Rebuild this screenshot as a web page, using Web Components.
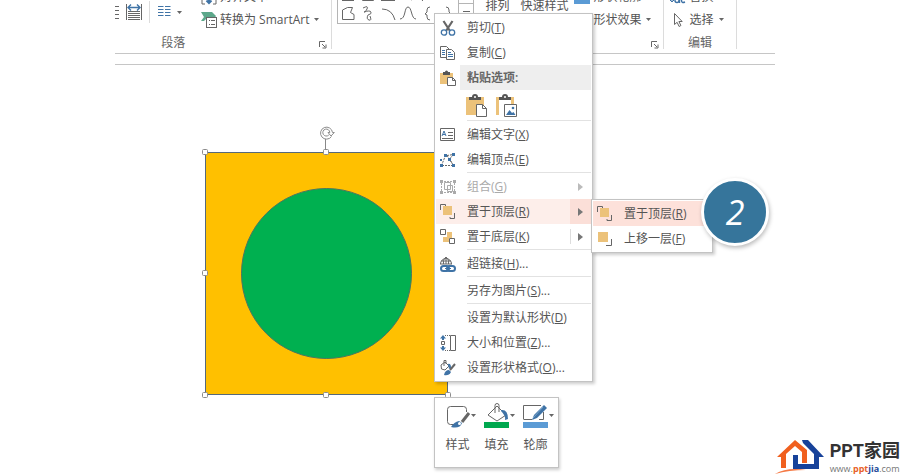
<!DOCTYPE html>
<html lang="zh-CN">
<head>
<meta charset="utf-8">
<title>置于顶层</title>
<style>
html,body{margin:0;height:100%}
body{background:#fff;color:#555;font:12px/16px "Open Sans","Noto Sans CJK SC",sans-serif;overflow:hidden}
</style>
</head>
<body>
<slide-editor>
  <ribbon-bar slot="ribbon">
    <ribbon-group label="段落" launcher style="--shift:100px">
      <ribbon-tools></ribbon-tools>
      <ribbon-stack style="--left:19px">
        <ribbon-command icon="valign" arrow>对齐文本</ribbon-command>
        <ribbon-command icon="smartart" arrow>转换为 SmartArt</ribbon-command>
      </ribbon-stack>
    </ribbon-group>
    <ribbon-group label="" launcher>
      <shape-gallery></shape-gallery>
      <ribbon-caption>排列</ribbon-caption>
      <ribbon-caption>快速样式</ribbon-caption>
      <ribbon-stack style="--left:6px">
        <ribbon-command icon="outlinebar" arrow>形状轮廓</ribbon-command>
        <ribbon-command icon="blank" arrow>形状效果</ribbon-command>
      </ribbon-stack>
    </ribbon-group>
    <ribbon-group label="编辑">
      <ribbon-stack style="--left:6px">
        <ribbon-command icon="replace" arrow>替换</ribbon-command>
        <ribbon-command icon="cursor" arrow>选择</ribbon-command>
      </ribbon-stack>
    </ribbon-group>
  </ribbon-bar>
  <selected-shape></selected-shape>
  <context-menu>
    <menu-item icon="cut" key="T">剪切</menu-item>
    <menu-item icon="copy" key="C">复制</menu-item>
    <paste-options></paste-options>
    <menu-line></menu-line>
    <menu-item icon="text" key="X">编辑文字</menu-item>
    <menu-item icon="points" key="E">编辑顶点</menu-item>
    <menu-line></menu-line>
    <menu-item icon="group" key="G" arrow disabled>组合</menu-item>
    <menu-item icon="front" key="R" arrow split active>置于顶层</menu-item>
    <menu-item icon="back" key="K" arrow split>置于底层</menu-item>
    <menu-line></menu-line>
    <menu-item icon="link" key="H" more>超链接</menu-item>
    <menu-line></menu-line>
    <menu-item icon="blank" key="S" more>另存为图片</menu-item>
    <menu-line></menu-line>
    <menu-item icon="blank" key="D">设置为默认形状</menu-item>
    <menu-item icon="size" key="Z" more>大小和位置</menu-item>
    <menu-item icon="format" key="O" more>设置形状格式</menu-item>
  </context-menu>
  <context-menu sub>
    <menu-item icon="front" key="R" active>置于顶层</menu-item>
    <menu-item icon="forward" key="F">上移一层</menu-item>
  </context-menu>
  <step-badge>2</step-badge>
  <mini-toolbar>
    <mini-button icon="style">样式</mini-button>
    <mini-button icon="fill">填充</mini-button>
    <mini-button icon="outline">轮廓</mini-button>
  </mini-toolbar>
  <site-mark></site-mark>
</slide-editor>
<script>
const G='#666',B='#3f73a6',T='#ecc27a';
const ICONS={
blank:[16,16,''],
valign:[16,16,`<path d="M1 5v10h3M15 5v10h-3" fill="none" stroke="${G}"/><path d="M8 5v9M5.500 11.500 8 14l2.500-2.500" fill="none" stroke="${B}" stroke-width="2"/>`],
smartart:[16,16,`<path d="M0 0h11l4 4-2 3H5L3 9H0l3-4z" fill="#5da88b"/><rect x="5.500" y="5.500" width="10" height="10" fill="#fff" stroke="${G}"/><path d="M8 8.500h1M10 8.500h4M8 12.500h1M10 12.500h4" stroke="${G}"/>`],
outlinebar:[16,16,`<rect y="8" width="16" height="7" fill="#5b9bd5"/>`],
replace:[16,16,`<path d="M2 8v4M0 11l2 2 2-2" fill="none" stroke="${B}"/><g fill="none" stroke="${B}" stroke-width="1.400"><circle cx="7" cy="11.500" r="2"/><path d="M9.500 9v5M15 10q-3.500-1.500-3.500 1.500t3.500 1.500"/></g>`],
cursor:[16,16,`<path d="M4.500 1.500v11l2.600-2.200 2 4.200 1.800-1-2-4h3.300z" fill="#fff" stroke="${G}"/>`],
cut:[16,16,`<path d="M3.500 1 10 11M12.500 1 6 11" stroke="${G}" stroke-width="2.200"/><g fill="#fff" stroke="${B}" stroke-width="1.300"><circle cx="4" cy="12.500" r="2.700"/><circle cx="12" cy="12.500" r="2.700"/></g>`],
copy:[16,16,`<g fill="#fff" stroke="${G}"><path d="M.5 1.500h6l2.500 2.500v8.500H.5z"/><path d="M6.500 4.500h5l3 3v7h-8z"/></g><path d="M2 5.500h3M2 7.500h3M2 9.500h3M8 9.500h5M8 11.500h5M8 7.500h3" stroke="${B}"/>`],
paste:[16,16,`<path d="M0 3h13v11H0z" fill="${T}"/><path d="M3 2h2a1.500 1.500 0 0 1 3 0h2v3H3z" fill="#555"/><path d="M7.500 7.500h5l3 3v5h-8z" fill="#fff" stroke="${G}"/><path d="M12.500 7.500v3h3" fill="none" stroke="${G}"/>`],
paste1:[23,24,`<path d="M1 4h18v18H1z" fill="${T}"/><path d="M4 4h3a3 3 0 0 1 6 0h3v3H4z" fill="#555"/><circle cx="10" cy="4" r="1" fill="#fff"/><path d="M11.500 11.500h6l4 4v8h-10z" fill="#fff" stroke="${G}"/><path d="M17.500 11.500v4h4" fill="none" stroke="${G}"/>`],
paste2:[23,24,`<path d="M1 4h18v18H1z" fill="${T}"/><path d="M4 7h12v15H4z" fill="#fff"/><path d="M4 4h3a3 3 0 0 1 6 0h3v3H4z" fill="#555"/><circle cx="10" cy="4" r="1" fill="#fff"/><path d="M9.500 11.500h12v12h-12z" fill="#fff" stroke="${G}"/><path d="m11 22 3.500-5 2.500 3 1.500-1 2 3z" fill="${B}"/><circle cx="18" cy="15" r="1.300" fill="${B}"/>`],
text:[16,16,`<path d="M.5 1.500h14v12H.5z" fill="#fff" stroke="${G}"/><path d="m2 9 2-5 2 5M3 7.500h2" fill="none" stroke="${B}"/><path d="M8 5.500h5M8 8.500h5M2 11.500h11" stroke="${G}"/>`],
points:[16,16,`<path d="M1.500 13.500 5.500 3.500M7 3.500l6.500-1L9.500 7l4 6.500z" fill="none" stroke="${G}" stroke-dasharray="2 1"/><path d="M2 13.500h11" stroke="${G}" stroke-dasharray="2 1"/><g fill="${B}"><path d="M0 12h3v3H0zM4 2h3v3H4zM12 1h3v3h-3zM8 6h3v3H8zM12 12h3v3h-3zM0 7h2v2H0z"/></g>`],
group:[16,16,`<g fill="none" stroke="#aaa"><path d="M4 2.500h8M4 13.500h8M1.500 4v8M14.500 4v8" stroke-dasharray="2 1"/><path d="M4.500 3.500h6v7h-6zM7.500 6.500h5v6h-5z"/></g><path d="M0 1h3v3H0zM13 1h3v3h-3zM0 12h3v3H0zM13 12h3v3h-3z" fill="#aaa"/>`],
front:[16,16,`<path d="M.5 6V.5h5V2M14.500 9v5.500H10V13" fill="none" stroke="${G}"/><path d="M3 2h9v9H3z" fill="${T}"/>`],
forward:[16,16,`<path d="M14.500 8v6.500H9" fill="none" stroke="${G}"/><path d="M1 1h10v10H1z" fill="${T}"/>`],
back:[16,16,`<path d="M7 3h5v6H7zM3 8h6v5H3z" fill="${T}"/><path d="M.5.5h5v5h-5zM9.500 9.500h5v5h-5z" fill="#fff" stroke="${G}"/>`],
link:[16,16,`<path d="M.5 8a5.500 5.500 0 1 1 11 0M6 1v7M1 5h10M0 8h12M6 1Q2 4 3.500 8M6 1q4 3 2.500 7" fill="none" stroke="${G}"/><rect x="1" y="10" width="8" height="5" rx="2.500" fill="#fff" stroke="${B}" stroke-width="2"/><rect x="7" y="10" width="8" height="5" rx="2.500" fill="none" stroke="${B}" stroke-width="2"/><path d="M5 12.500h6" stroke="${B}"/>`],
size:[16,16,`<path d="M3 0 0 3.500h2V5h2V3.500h2zM3 16l-3-3.500h2V11h2v1.500h2z" fill="${B}"/><path d="M1.500 6.500h3v3h-3zM10.500.5h5v15h-5z" fill="#fff" stroke="${G}"/><path d="M5 .5h5M5 15.500h5" stroke="${G}" stroke-dasharray="1 1"/>`],
format:[16,16,`<path d="m1 5 4-3 4 4-4 4-3.500-1zM4 6V.5h2V4" fill="#fff" stroke="${G}"/><path d="M8 4q3-1 3 4L9 9z" fill="${B}"/><path d="m15 4-5 6" stroke="${G}" stroke-width="2"/><path d="M4 15q1-5 5-5l2 2q-2 4-7 3z" fill="${B}"/>`],
style:[32,26,`<path d="M9 21.500H5.500a3 3 0 0 1-3-3v-12a3 3 0 0 1 3-3h13a3 3 0 0 1 3 3V9" fill="#fff" stroke="${G}"/><path d="m24 10-7 9" stroke="${G}" stroke-width="3"/><path d="M6 24q3-5 8-6l3 2q-2 6-11 4z" fill="${B}"/><circle cx="14.500" cy="20.500" r="1.500" fill="#fff"/><path d="M26 11h5l-2.500 3z" fill="${G}"/>`],
fill:[32,26,`<path d="M4 12 13 3l9 9-9 6zM11 10V2.500a2 2 0 0 1 4 0V9" fill="#fff" stroke="${G}"/><path d="M17 7q7-1 7 9l-3 1q1-4-4-9z" fill="${B}"/><path d="M0 19h25v6H0z" fill="#00a84f"/><path d="M26 11h5l-2.500 3z" fill="${G}"/>`],
outline:[32,26,`<path d="M.5 16V2.500H18M.5 16.500H9M20.500 9v7.500H16" fill="none" stroke="${G}"/><path d="M21 2 11 12l-2 5 5-2L24 5z" fill="${B}"/><path d="M20 4 10 15" stroke="#7aa5cc"/><path d="M0 19h25v6H0z" fill="#5b9bd5"/><path d="M26 11h5l-2.500 3z" fill="${G}"/>`],
lines:[13,12,`<path d="M0 .5h5.500M0 3.500h5.500M0 6.500h5.500M0 9.500h5.500M7 .5h5.500M7 3.500h5.500M7 6.500h5.500M7 9.500h5.500" stroke="${B}"/>`],
listend:[4,14,`<path d="M0 1.500h4M0 5.500h4M0 9.500h4M0 13.500h4" stroke="${G}"/>`],
spread:[16,16,`<path d="M.5 0v16M15.500 0v16M2 7.500h12M2 9.500h12M2 11.500h12M2 13.500h12M2 15.500h12" stroke="${G}"/><path d="M2 3.500h12M5 .5l-3 3 3 3M11 .5l3 3-3 3" fill="none" stroke="${B}" stroke-width="1.400"/>`],
launch:[8,8,`<path d="M.5 6V.5H6M3 3l3 3M7 3.500V7H3.500" fill="none" stroke="${G}"/>`],
down:[5,3,`<path d="M0 0h5L2.500 3z" fill="${G}"/>`],
right:[5,8,`<path d="M0 0l5 4-5 4z" fill="currentColor"/>`]
};
const icon=n=>{const[w,h,s]=ICONS[n];return `<svg width="${w}" height="${h}" viewBox="0 0 ${w} ${h}" aria-hidden="true">${s}</svg>`};
const BASE='svg{display:block;flex:none}button{font:inherit;color:inherit;background:none;border:0;padding:0;margin:0;text-align:left;white-space:nowrap}';
function define(name,css,html){
  customElements.define(name,class extends HTMLElement{
    connectedCallback(){
      if(this.shadowRoot)return;
      this.attachShadow({mode:'open'}).innerHTML=`<style>:host{box-sizing:border-box}${BASE}${css}</style>${html(this)}`;
    }
  });
}
define('slide-editor',':host{display:block;position:relative;min-height:100vh}',()=>'<slot name="ribbon"></slot><main><slot></slot></main>');
define('ribbon-bar',`:host{display:block;margin:0 125px 0 115px;border-bottom:1px solid #c6c6c6;padding-bottom:10px}
nav{display:flex;align-items:flex-end;height:54px;overflow:hidden;border-bottom:1px solid #c6c6c6;padding-bottom:4px;box-sizing:border-box}`,()=>'<nav><slot></slot></nav>');
define('ribbon-group',`:host{display:flex;flex-direction:column;flex:none;border-right:1px solid #dcdcdc}
.b{display:flex;align-items:flex-end}.f{height:15px;padding:1px var(--shift,0) 0 0;box-sizing:border-box;text-align:center;color:#666;position:relative}
button{position:absolute;right:4px;bottom:0}`,e=>`<div class="b"><slot></slot></div><div class="f"><span>${e.getAttribute('label')}</span>${e.hasAttribute('launcher')?`<button aria-label="更多">${icon('launch')}</button>`:''}</div>`);
define('ribbon-tools',`:host{display:flex;align-items:center;padding-bottom:11px}
.s{margin:0 7px}i{width:1px;height:22px;background:#dcdcdc}.c{display:flex;align-items:center;gap:6px;margin-left:8px}`,
()=>`${icon('listend')}<button class="s" aria-label="分散对齐">${icon('spread')}</button><i></i><button class="c" aria-label="分栏">${icon('lines')}${icon('down')}</button>`);
define('ribbon-stack',':host{display:flex;flex-direction:column;padding:0 12px 3px var(--left)}',()=>'<slot></slot>');
define('ribbon-command',`:host{display:block}button{display:flex;align-items:center;height:23px}span{margin:0 5px 0 3px}`,
e=>`<button>${icon(e.getAttribute('icon'))}<span><slot></slot></span>${icon('down')}</button>`);
define('ribbon-caption',':host{display:block;padding:0 0 20px 11px}',()=>'<button><slot></slot></button>');
define('shape-gallery',`:host{display:flex;margin:0 0 10px 5px;border:1px solid #b5b5b5}
.s{width:15px;border-left:1px solid #b5b5b5;display:flex;flex-direction:column;box-sizing:border-box}.s button{height:20px;display:grid;place-items:center}.s button+button{border-top:1px solid #b5b5b5}`,
()=>`<svg width="120" height="40" viewBox="0 0 120 40" fill="none" stroke="#666"><path d="M4 17.500h12M24.500 8v9.500h11V8M43 17.500h14M66 9l7 8 2-1M84 18l8-9M104 17l5-6"/><path d="M4.500 36.500V27l5-2.500h5l-2 5 3.500 2v5z"/><path d="M25 25q6-3 4 1t-3 3q6-2 7 0t-3 3q-2 4 1 5t1-4"/><path d="M44 26q10 0 13 11M62 36c6 0 4-12 8-12s3 12 8 12"/><path d="M92 24q-3 0-3 3v2l-2 2 2 1v2q0 3 3 3M108 24q3 0 3 3v2l2 2-2 1v2q0 3-3 3"/></svg><div class="s"><button aria-label="向下">${icon('down')}</button><button aria-label="其他"><svg width="7" height="8"><path d="M0 1.500h7M1 4h5L3.500 7z" stroke="#666" fill="#666"/></svg></button></div>`);
define('selected-shape',`:host{position:absolute;left:198px;top:124px}`,
()=>`<svg width="256" height="280" viewBox="198 124 256 280" role="img" aria-label="圆形与正方形"><rect x="205.500" y="152.500" width="242" height="242" fill="#ffc000" stroke="#56697a"/><circle cx="326.500" cy="273.500" r="85" fill="#00b050" stroke="#4a7560"/><path d="M325.500 139v10" stroke="#888"/><g fill="none" stroke="#8c8c8c"><path d="M331.500 136.500a6 6 0 1 1 1-4M328.800 135a3.500 3.500 0 1 1 1-2.500M329.800 132.500h-1.800l3 3.500 3.300-3.500h-1.800"/></g><g fill="#fff" stroke="#8c8c8c">${[[205,152],[326,152],[205,273],[205,395],[326,395],[448,395]].map(([x,y])=>`<rect x="${x-2.5}" y="${y-2.5}" width="5" height="5" rx="1"/>`).join('')}</g></svg>`);
define('context-menu',`:host{position:absolute;left:434px;top:13px;width:159px;padding:1px;border:1px solid #c3c3c3;background:#fff;box-shadow:2px 2px 3px #0003}
:host([sub]){left:591px;top:199px;width:122px;--hot:#fde1da}`,()=>'<slot></slot>');
define('menu-item',`:host{display:block}button{display:flex;align-items:center;width:100%;height:25px;padding-left:4px}
.t{flex:1;margin-left:11px}.a{width:21px;height:25px;display:grid;place-items:center;box-sizing:border-box;color:#777}
:host([split]) .a{background:linear-gradient(#ddd,#ddd) 0 50%/1px 15px no-repeat}
:host([active]) button{background:var(--hot,#fdeeea)}:host([active][split]) .a{background:#fbdfd8}:host([disabled]){color:#aaa}:host([disabled]) .a{color:#bbb}`,
e=>`<button ${e.hasAttribute('disabled')?'disabled':''}>${icon(e.getAttribute('icon'))}<span class="t"><slot></slot>(<u>${e.getAttribute('key')}</u>)${e.hasAttribute('more')?'...':''}</span>${e.hasAttribute('arrow')?`<span class="a">${icon('right')}</span>`:''}</button>`);
define('menu-line',':host{display:block;height:1px;margin:0 0 1px 31px;background:#e2e2e2}',()=>'');
define('paste-options',`:host{display:block}.h{display:flex;align-items:center;padding-left:4px;height:25px}.h b{flex:1;margin-left:4px;padding-left:7px;line-height:25px;background:#eee;color:#666;font-weight:600}
.o{display:flex;gap:7px;height:30px;padding:3px 0 0 29px;align-items:flex-start;box-sizing:border-box}`,
()=>`<div class="h">${icon('paste')}<b>粘贴选项:</b></div><div class="o"><button aria-label="使用目标主题">${icon('paste1')}</button><button aria-label="图片">${icon('paste2')}</button></div>`);
define('step-badge',`:host{position:absolute;left:701px;top:178px;width:68px;height:68px;border:3px solid #fff;border-radius:50%;background:#36759b;color:#fff;display:grid;place-items:center;font:italic 34px/34px "Open Sans",sans-serif;box-shadow:1px 2px 4px #0004}`,()=>'<span><slot></slot></span>');
define('mini-toolbar',':host{position:absolute;left:434px;top:397px;display:flex;padding:5px 3px 14px;border:1px solid #c3c3c3;background:#fff;box-shadow:1px 2px 3px #0003}',()=>'<slot></slot>');
define('mini-button',':host{display:block;width:39px}button{width:100%;display:grid;justify-items:center;gap:8px}svg{margin-left:6px}',e=>`<button>${icon(e.getAttribute('icon'))}<span><slot></slot></span></button>`);
define('site-mark',`:host{position:absolute;right:0;bottom:0}a{display:flex;align-items:flex-end;gap:5px;color:#333;text-decoration:none;white-space:nowrap}
b{display:block;font:bold 18px/22px Roboto,"Noto Sans CJK SC",sans-serif}small{display:block;font:9px/13px "Open Sans",sans-serif;color:#777}em{font-style:normal;font-weight:bold;color:#e8622a}em+em{color:#244b9a}`,
()=>`<a href="#"><svg width="50" height="36" viewBox="0 0 50 36"><path d="M0 35Q12 28 31 31 14 31 0 35z" fill="#f57a45"/><path d="M2 18 20 1l12 10v13h-5V13l-7-6-9 8v14H6V18z" fill="#f0601f"/><path d="M27 1h6l16 17h-5v12H18V16h5v9h16V15L28 4z" fill="#17429a"/></svg><span><b>PPT家园</b><small>www.<em>ppt</em><em>jia</em>.com</small></span></a>`);
</script>
</body>
</html>
